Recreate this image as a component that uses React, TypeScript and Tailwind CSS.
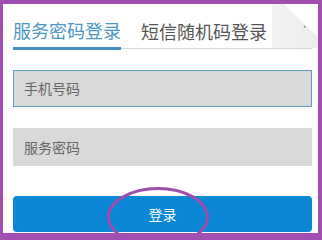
export default function App() {
  return (
    <div
      className="relative w-[322px] h-[240px] overflow-hidden bg-white border-[#a04fb0] border-t-4 border-l-[3px] border-r-4 border-b-[7px]"
      style={{ fontFamily: '"Noto Sans CJK SC", "Noto Sans", sans-serif' }}
    >
      <div className="flex flex-col pl-[10px] pr-[6px]">
        {/* tabs */}
        <div className="relative flex items-end gap-[20px] border-b border-[#d8d8d8] h-[45px]">
          <div className="w-[108px] -mb-[2px] text-[18px] leading-[24px] text-[#4a97c6] pb-[5px] border-b-[3px] border-[#3f8fbf] whitespace-nowrap">
            服务密码登录
          </div>
          <div className="text-[18px] leading-[24px] text-[#555] pb-[5px] whitespace-nowrap">
            短信随机码登录
          </div>
          <div className="absolute right-[-6px] top-0 bottom-0 w-[46px] flex items-center justify-end pr-[10px] bg-gradient-to-r from-[#f2f2f2] to-[#ececec] [clip-path:polygon(0_0,25%_0,100%_75%,100%_100%,0_100%)]">
            <span className="text-[7px] text-[#666]">·</span>
          </div>
        </div>

        {/* inputs */}
        <div className="mt-[21px] h-[37px] bg-[#d9d9d9] border border-[#5b9dc1] flex items-center pl-[10px] text-[14px] text-[#666]">
          手机号码
        </div>
        <div className="mt-[21px] h-[38px] bg-[#d9d9d9] flex items-center pl-[11px] text-[14px] text-[#666]">
          服务密码
        </div>

        {/* button */}
        <div className="mt-[30px] h-[36px] bg-[#0a87d5] rounded-[4px] flex items-center justify-center text-white text-[14px]">
          登录
        </div>
      </div>

      {/* annotation ellipse */}
      <div className="absolute left-[104px] top-[183px] w-[102px] h-[60px] rounded-[50%] border-[3px] border-[#9d4dac]" />
    </div>
  );
}
